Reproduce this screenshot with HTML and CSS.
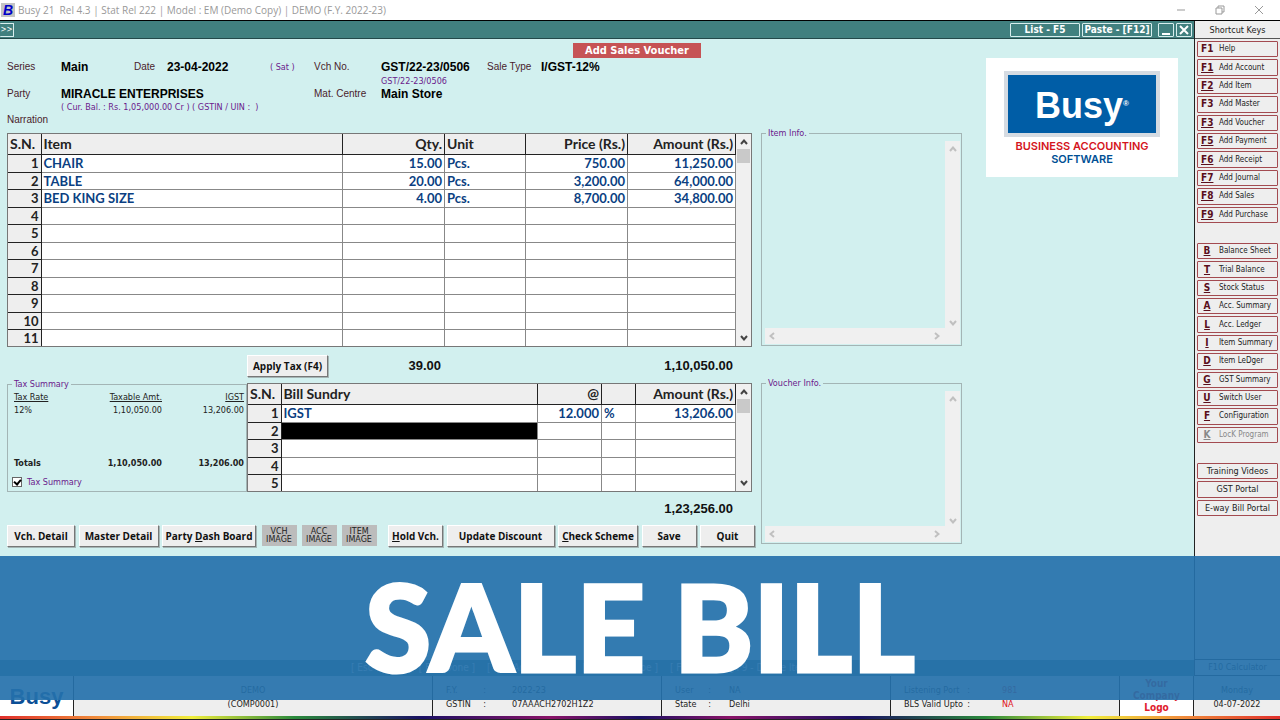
FILE: index.html
```html
<!DOCTYPE html>
<html lang="en">
<head>
    <meta charset="UTF-8">
    <meta name="viewport" content="width=device-width, initial-scale=1.0">
    <title>Busy 21 - Add Sales Voucher</title>
    <link rel="stylesheet" href="styles.css">
</head>
<body>
    <!-- Shared icons -->
    <svg class="sprite" aria-hidden="true">
        <symbol id="up" viewBox="0 0 8 6"><path d="M1 5l3-3.5L7 5"/></symbol>
        <symbol id="down" viewBox="0 0 8 6"><path d="M1 1l3 3.5L7 1"/></symbol>
        <symbol id="left" viewBox="0 0 6 8"><path d="M5 1L1.5 4 5 7"/></symbol>
        <symbol id="right" viewBox="0 0 6 8"><path d="M1 1l3.5 3L1 7"/></symbol>
    </svg>

    <!-- Title bar -->
    <header class="titlebar">
        <span class="app-icon">B</span>
        <span class="app-title">Busy 21&nbsp; Rel 4.3 | Stat Rel 222 | Model : EM (Demo Copy) | DEMO (F.Y. 2022-23)</span>
        <div class="window-controls">
            <button type="button" aria-label="Minimize"><svg viewBox="0 0 10 10"><path d="M1 5h8"/></svg></button>
            <button type="button" aria-label="Restore"><svg viewBox="0 0 10 10"><path d="M1 3h6v6H1zM3 3V1h6v6H7"/></svg></button>
            <button type="button" aria-label="Close"><svg viewBox="0 0 10 10"><path d="M1 1l8 8M9 1L1 9"/></svg></button>
        </div>
    </header>

    <div class="window">
        <div class="workspace">
            <div class="toolbar">
                <button type="button" class="expand">&gt;&gt;</button>
                <button type="button" class="tool">List - F5</button>
                <button type="button" class="tool">Paste - [F12]</button>
                <button type="button" class="tool-icon" aria-label="Minimize voucher"><svg viewBox="0 0 14 12"><path d="M3 10h8"/></svg></button>
                <button type="button" class="tool-icon" aria-label="Close voucher"><svg viewBox="0 0 14 12"><path d="M3 2l8 8M11 2l-8 8"/></svg></button>
            </div>

            <main class="voucher">
                <div class="entry">
                    <h1>Add Sales Voucher</h1>

                    <!-- Voucher header -->
                    <form class="head">
                        <label for="series">Series</label>
                        <input id="series" type="text" value="Main">
                        <label for="date">Date</label>
                        <input id="date" type="text" value="23-04-2022">
                        <span class="note">( Sat )</span>
                        <label for="vchno">Vch No.</label>
                        <input id="vchno" type="text" value="GST/22-23/0506">
                        <label for="saletype">Sale Type</label>
                        <input id="saletype" type="text" value="I/GST-12%">

                        <span class="note vch-note">GST/22-23/0506</span>

                        <label for="party" class="line-3">Party</label>
                        <input id="party" class="line-3 wide" type="text" value="MIRACLE ENTERPRISES">
                        <label for="centre" class="line-3 centre">Mat. Centre</label>
                        <input id="centre" class="line-3 rest" type="text" value="Main Store">

                        <span class="note party-note">( Cur. Bal. : Rs. 1,05,000.00 Cr ) ( GSTIN / UIN :&nbsp; )</span>

                        <label for="narration" class="line-5">Narration</label>
                        <input id="narration" class="line-5 full" type="text" value="">
                    </form>

                    <!-- Items -->
                    <div class="grid">
                        <table>
                            <colgroup>
                                <col class="col-sn"><col><col class="col-qty"><col class="col-unit"><col class="col-price"><col class="col-amount">
                            </colgroup>
                            <thead>
                                <tr><th>S.N.</th><th>Item</th><th class="num">Qty.</th><th>Unit</th><th class="num">Price (Rs.)</th><th class="num">Amount (Rs.)</th></tr>
                            </thead>
                            <tbody>
                                <tr><th>1</th><td>CHAIR</td><td class="num">15.00</td><td>Pcs.</td><td class="num">750.00</td><td class="num">11,250.00</td></tr>
                                <tr><th>2</th><td>TABLE</td><td class="num">20.00</td><td>Pcs.</td><td class="num">3,200.00</td><td class="num">64,000.00</td></tr>
                                <tr><th>3</th><td>BED KING SIZE</td><td class="num">4.00</td><td>Pcs.</td><td class="num">8,700.00</td><td class="num">34,800.00</td></tr>
                                <tr><th>4</th><td></td><td></td><td></td><td></td><td></td></tr>
                                <tr><th>5</th><td></td><td></td><td></td><td></td><td></td></tr>
                                <tr><th>6</th><td></td><td></td><td></td><td></td><td></td></tr>
                                <tr><th>7</th><td></td><td></td><td></td><td></td><td></td></tr>
                                <tr><th>8</th><td></td><td></td><td></td><td></td><td></td></tr>
                                <tr><th>9</th><td></td><td></td><td></td><td></td><td></td></tr>
                                <tr><th>10</th><td></td><td></td><td></td><td></td><td></td></tr>
                                <tr><th>11</th><td></td><td></td><td></td><td></td><td></td></tr>
                            </tbody>
                        </table>
                        <div class="scroll">
                            <svg class="chev"><use href="#up"/></svg>
                            <span class="thumb"></span>
                            <svg class="chev"><use href="#down"/></svg>
                        </div>
                    </div>

                    <div class="totals">
                        <button type="button" class="btn apply">Apply Tax (F4)</button>
                        <span class="total total-qty">39.00</span>
                        <span class="total total-amount">1,10,050.00</span>
                    </div>

                    <!-- Tax summary and bill sundries -->
                    <div class="lower">
                        <fieldset class="box tax">
                            <legend>Tax Summary</legend>
                            <table class="tax-table">
                                <thead>
                                    <tr><th>Tax Rate</th><th class="num">Taxable Amt.</th><th class="num">IGST</th></tr>
                                </thead>
                                <tbody>
                                    <tr><td>12%</td><td class="num">1,10,050.00</td><td class="num">13,206.00</td></tr>
                                </tbody>
                                <tfoot>
                                    <tr><td>Totals</td><td class="num">1,10,050.00</td><td class="num">13,206.00</td></tr>
                                </tfoot>
                            </table>
                            <div class="tax-check">
                                <input type="checkbox" id="taxSummary" checked>
                                <label for="taxSummary">Tax Summary</label>
                            </div>
                        </fieldset>
                        <div class="grid sundry">
                            <table>
                                <colgroup>
                                    <col class="col-sn"><col><col class="col-rate"><col class="col-percent"><col class="col-sum">
                                </colgroup>
                                <thead>
                                    <tr><th>S.N.</th><th>Bill Sundry</th><th class="num">@</th><th></th><th class="num">Amount (Rs.)</th></tr>
                                </thead>
                                <tbody>
                                    <tr><th>1</th><td>IGST</td><td class="num">12.000</td><td>%</td><td class="num">13,206.00</td></tr>
                                    <tr><th>2</th><td class="current"></td><td></td><td></td><td></td></tr>
                                    <tr><th>3</th><td></td><td></td><td></td><td></td></tr>
                                    <tr><th>4</th><td></td><td></td><td></td><td></td></tr>
                                    <tr><th>5</th><td></td><td></td><td></td><td></td></tr>
                                </tbody>
                            </table>
                            <div class="scroll">
                                <svg class="chev"><use href="#up"/></svg>
                                <span class="thumb"></span>
                                <svg class="chev"><use href="#down"/></svg>
                            </div>
                        </div>
                    </div>

                    <div class="grand"><span class="total">1,23,256.00</span></div>

                    <div class="actions">
                        <button type="button" class="btn w-vch">Vch. Detail</button>
                        <button type="button" class="btn w-master">Master Detail</button>
                        <button type="button" class="btn w-party">Party <u>D</u>ash Board</button>
                        <div class="images">
                            <button type="button" class="btn-image">VCH<br>IMAGE</button>
                            <button type="button" class="btn-image">ACC<br>IMAGE</button>
                            <button type="button" class="btn-image">ITEM<br>IMAGE</button>
                        </div>
                        <button type="button" class="btn w-small"><u>H</u>old Vch.</button>
                        <button type="button" class="btn w-discount">Update Discount</button>
                        <button type="button" class="btn w-master"><u>C</u>heck Scheme</button>
                        <button type="button" class="btn w-small">Save</button>
                        <button type="button" class="btn w-small">Quit</button>
                    </div>
                </div>

                <!-- Info panels -->
                <div class="info">
                    <fieldset class="box item-info">
                        <legend>Item Info.</legend>
                        <div class="pane">
                            <div class="pane-y"><svg class="chev"><use href="#up"/></svg><svg class="chev"><use href="#down"/></svg></div>
                            <div class="pane-x"><svg class="chev-h"><use href="#left"/></svg><svg class="chev-h"><use href="#right"/></svg></div>
                        </div>
                    </fieldset>
                    <fieldset class="box voucher-info">
                        <legend>Voucher Info.</legend>
                        <div class="pane">
                            <div class="pane-y"><svg class="chev"><use href="#up"/></svg><svg class="chev"><use href="#down"/></svg></div>
                            <div class="pane-x"><svg class="chev-h"><use href="#left"/></svg><svg class="chev-h"><use href="#right"/></svg></div>
                        </div>
                    </fieldset>
                </div>

                <!-- Product logo -->
                <div class="brand">
                    <div class="brand-name">Busy<sup>®</sup></div>
                    <div class="brand-red">BUSINESS ACCOUNTING</div>
                    <div class="brand-blue">SOFTWARE</div>
                </div>
            </main>

            <div class="hints">
                <span>[ Esc - Quit ]</span>
                <span>[ F2 - Done ]</span>
                <span>[ F3 - Add Master ]</span>
                <span>[ F4 - Sale Type ]</span>
                <span>[ F5 - List ]</span>
                <span>[ F9 - Delete Items ]</span>
            </div>
        </div>

        <!-- Shortcut keys -->
        <aside class="sidebar">
            <h2>Shortcut Keys</h2>
            <div class="keys keys-add">
                <button type="button"><b>F1</b>Help</button>
                <button type="button"><b><u>F1</u></b>Add Account</button>
                <button type="button"><b><u>F2</u></b>Add Item</button>
                <button type="button"><b>F3</b>Add Master</button>
                <button type="button"><b><u>F3</u></b>Add Voucher</button>
                <button type="button"><b><u>F5</u></b>Add Payment</button>
                <button type="button"><b><u>F6</u></b>Add Receipt</button>
                <button type="button"><b><u>F7</u></b>Add Journal</button>
                <button type="button"><b><u>F8</u></b>Add Sales</button>
                <button type="button"><b><u>F9</u></b>Add Purchase</button>
            </div>
            <div class="keys keys-reports">
                <button type="button"><b><u>B</u></b>Balance Sheet</button>
                <button type="button"><b><u>T</u></b>Trial Balance</button>
                <button type="button"><b><u>S</u></b>Stock Status</button>
                <button type="button"><b><u>A</u></b>Acc. Summary</button>
                <button type="button"><b><u>L</u></b>Acc. Ledger</button>
                <button type="button"><b><u>I</u></b>Item Summary</button>
                <button type="button"><b><u>D</u></b>Item LeDger</button>
                <button type="button"><b><u>G</u></b>GST Summary</button>
                <button type="button"><b><u>U</u></b>Switch User</button>
                <button type="button"><b><u>F</u></b>ConFiguration</button>
                <button type="button" disabled><b><u>K</u></b>LocK Program</button>
            </div>
            <div class="keys keys-links">
                <button type="button">Training Videos</button>
                <button type="button">GST Portal</button>
                <button type="button">E-way Bill Portal</button>
            </div>
            <div class="calculator">F10 Calculator</div>
        </aside>
    </div>

    <!-- Status bar -->
    <footer class="status">
        <div class="cell cell-logo">Busy</div>
        <div class="cell cell-company"><span>DEMO</span><span>(COMP0001)</span></div>
        <dl class="cell cell-data">
            <dt>F.Y.</dt><dd>2022-23</dd>
            <dt>GSTIN</dt><dd>07AAACH2702H1Z2</dd>
        </dl>
        <dl class="cell cell-data cell-user">
            <dt>User</dt><dd>NA</dd>
            <dt>State</dt><dd>Delhi</dd>
        </dl>
        <dl class="cell cell-data cell-port">
            <dt>Listening Port</dt><dd class="red">981</dd>
            <dt>BLS Valid Upto</dt><dd class="red">NA</dd>
        </dl>
        <div class="cell cell-yours">Your<br>Company<br>Logo</div>
        <div class="cell cell-date"><span>Monday</span><span>04-07-2022</span></div>
    </footer>
    <div class="rainbow"></div>

    <div class="banner">SALE BILL</div>
</body>
</html>
```

FILE: styles.css
```css
* {
    box-sizing: border-box;
}

body {
    position: relative;
    display: flex;
    flex-direction: column;
    min-height: 100vh;
    margin: 0;
    background: #d2f0ef;
    color: #222;
    font-family: "DejaVu Sans Condensed", "DejaVu Sans", sans-serif;
    font-size: 9px;
    line-height: 12px;
}

button {
    padding: 0;
    font: inherit;
    color: inherit;
    white-space: nowrap;
    cursor: pointer;
}

svg {
    fill: none;
    stroke: currentColor;
}

.sprite {
    position: absolute;
    width: 0;
    height: 0;
}

/* Title bar */
.titlebar {
    display: flex;
    align-items: center;
    gap: 3px;
    height: 20px;
    padding-left: 1px;
    background: #fff;
    color: #999;
    font-family: "Open Sans", sans-serif;
    font-size: 10px;
}

.app-icon {
    width: 14px;
    height: 14px;
    background: #c4c4c4;
    color: #0000c8;
    font: italic bold 14px/14px "Liberation Sans", sans-serif;
    text-align: center;
}

.window-controls {
    display: flex;
    gap: 29px;
    margin-left: auto;
    padding-right: 16px;
}

.window-controls button {
    width: 10px;
    height: 10px;
    border: 0;
    background: none;
}

.window-controls svg {
    display: block;
}

/* Workspace */
.window {
    display: flex;
    flex: 1;
    border-top: 1px solid #000;
}

.workspace {
    display: flex;
    flex: 1;
    flex-direction: column;
    min-width: 0;
}

.toolbar {
    display: flex;
    align-items: center;
    gap: 2px;
    height: 18px;
    padding-right: 2px;
    background: #41807f;
    border-bottom: 1px solid #24494a;
    color: #fff;
    font-size: 10px;
    font-weight: bold;
}

.toolbar button {
    height: 14px;
    border: 1px solid #d8eeee;
    border-radius: 1px;
    background: none;
    line-height: 12px;
}

.toolbar .expand {
    width: 14px;
    margin-right: auto;
    border-left: 0;
    font-size: 8px;
    font-weight: normal;
}

.toolbar .tool {
    width: 70px;
}

.toolbar .tool-icon {
    width: 16px;
}

.tool + .tool-icon {
    margin-left: 4px;
}

.tool-icon svg {
    display: block;
    stroke-width: 2;
}

.voucher {
    display: flex;
    flex: 1;
    align-items: flex-start;
    padding: 4px 16px 0 7px;
}

.entry {
    flex: 1;
    min-width: 0;
    max-width: 748px;
}

h1 {
    width: 128px;
    margin: 0 54px 0 auto;
    background: #c65355;
    color: #fff;
    font-family: "DejaVu Sans Condensed", "DejaVu Sans", sans-serif;
    font-size: 11px;
    line-height: 15px;
    text-align: center;
}

/* Voucher header */
.head {
    display: grid;
    grid-template-columns: 54px 73px 33px 103px 44px 67px 106px 54px 1fr;
    grid-template-rows: 18px 9px 18px 8px 18px;
    align-items: center;
    height: 75px;
}

.head label {
    color: #4a1c2c;
    font-family: "Liberation Sans", sans-serif;
    font-size: 10px;
}

.head input {
    width: 100%;
    min-width: 0;
    height: 16px;
    padding: 0;
    border: 0;
    outline: none;
    background: none;
    color: #000;
    font: bold 12px/16px "Liberation Sans", sans-serif;
}

.head .note {
    color: #6a1a8c;
    line-height: 8px;
    white-space: nowrap;
}

.head .vch-note {
    grid-column: 7;
    grid-row: 2;
}

.head .line-3 {
    grid-row: 3;
}

.head .line-5 {
    grid-row: 5;
}

.head .wide {
    grid-column: 2 / 6;
}

.head .centre {
    grid-column: 6;
}

.head .rest {
    grid-column: 7 / 10;
}

.head .party-note {
    grid-column: 2 / 7;
    grid-row: 4;
}

.head .full {
    grid-column: 2 / 10;
}

/* Data grids */
.grid {
    display: flex;
    margin-right: 3px;
    border: 1px solid #777;
    background: #fff;
}

.grid table {
    flex: 1;
    min-width: 0;
    border-collapse: collapse;
    table-layout: fixed;
    font: bold 13px/16px Lato, sans-serif;
}

.grid th,
.grid td {
    height: 18px;
    padding: 0 2px;
    border-right: 1px solid #888;
    border-bottom: 1px solid #888;
    color: #0b3f82;
    text-align: left;
    white-space: nowrap;
}

.grid tr:nth-child(even) th,
.grid tr:nth-child(even) td {
    height: 17px;
}

.grid tbody tr:last-child > * {
    height: 17px;
    border-bottom: 0;
}

.grid th {
    background: #eee;
    border-color: #222;
    color: #222;
}

.grid thead th {
    height: 20px;
    font-size: 14px;
}

.grid tbody th {
    text-align: right;
}

.grid .num,
.tax-table .num {
    text-align: right;
}

.grid .current {
    background: #000;
}

.col-sn { width: 33px; }
.col-qty { width: 102px; }
.col-unit { width: 81px; }
.col-price { width: 102px; }
.col-amount { width: 108px; }
.col-rate { width: 64px; }
.col-percent { width: 34px; }
.col-sum { width: 100px; }

.scroll {
    display: flex;
    flex-direction: column;
    align-items: center;
    width: 15px;
    padding: 5px 0;
    background: #f0f0f0;
    color: #444;
}

.scroll .thumb {
    width: 13px;
    height: 14px;
    margin: 4px 0 auto;
    background: #c9c9c9;
}

.chev {
    width: 8px;
    height: 6px;
    stroke-width: 2;
}

.chev-h {
    width: 6px;
    height: 8px;
    stroke-width: 2;
}

.total {
    color: #111;
    font: bold 13px/16px "Liberation Sans", sans-serif;
    text-align: right;
}

.totals {
    display: flex;
    align-items: center;
    height: 31px;
    padding: 7px 22px 0 240px;
}

.total-qty {
    width: 113px;
}

.total-amount {
    margin-left: auto;
}

.btn {
    height: 22px;
    padding-bottom: 1px;
    border: 1px solid;
    border-color: #fff #777 #777 #fff;
    box-shadow: 1px 1px 0 #a5b5b5;
    background: #eee;
    color: #111;
    font-family: "Open Sans", sans-serif;
    font-size: 10px;
    font-weight: bold;
}

.apply {
    width: 81px;
}

/* Tax summary and bill sundries */
.lower {
    display: flex;
    align-items: flex-end;
}

.box {
    min-width: 0;
    margin: 0;
    padding: 0;
    border: 1px solid #a3b5b5;
}

.box legend {
    margin-left: 4px;
    padding: 0 2px;
    color: #6a1a8c;
}

.tax {
    display: flex;
    flex-direction: column;
    width: 240px;
    height: 114px;
}

.tax-table {
    width: 100%;
    padding: 0 2px 0 6px;
    border-spacing: 0;
}

.tax-table th,
.tax-table td {
    height: 13px;
    padding: 0;
}

.tax-table th {
    font-weight: normal;
    text-align: left;
    text-decoration: underline;
}

.tax-table th:last-child {
    width: 82px;
}

.tax-table tfoot td {
    height: 55px;
    padding-bottom: 2px;
    font-weight: bold;
    vertical-align: bottom;
}

.tax-check {
    display: flex;
    align-items: center;
    gap: 5px;
    padding: 5px 4px 3px;
    color: #6a1a8c;
}

.tax-check input {
    width: 10px;
    height: 10px;
    margin: 0;
    border: 1px solid #666;
    appearance: none;
    background: #fff;
}

.tax-check input:checked::after {
    content: "";
    display: block;
    width: 3px;
    height: 5px;
    margin: 0 0 0 2px;
    border: solid #000;
    border-width: 0 2px 2px 0;
    transform: rotate(40deg);
}

.sundry {
    flex: 1;
    min-width: 0;
}

.grand {
    height: 33px;
    padding: 9px 22px 0 0;
    text-align: right;
}

.actions {
    display: flex;
    justify-content: space-between;
}

.images {
    display: flex;
    gap: 5px;
    margin: 0 8px 0 2px;
}

.btn-image {
    width: 35px;
    height: 21px;
    border: 0;
    background: #bcbcbc;
    color: #222;
    font: 8px/8px "DejaVu Sans", sans-serif;
}

.w-vch { width: 68px; }
.w-master { width: 80px; }
.w-party { width: 94px; }
.w-discount { width: 108px; }
.w-small { width: 55px; }

/* Info panels */
.info {
    width: 201px;
    margin: 84px 0 0 6px;
}

.item-info,
.voucher-info {
    display: flex;
    flex-direction: column;
}

.item-info {
    height: 219px;
}

.voucher-info {
    height: 167px;
    margin-top: 31px;
}

.pane {
    display: grid;
    flex: 1;
    grid-template-columns: 1fr 15px;
    grid-template-rows: 1fr 16px;
    padding: 2px 1px 1px 3px;
    color: #c0c0c0;
}

.pane-y {
    display: flex;
    grid-column: 2;
    flex-direction: column;
    justify-content: space-between;
    align-items: center;
    padding: 5px 0 2px;
    background: #f0f0f0;
}

.pane-x {
    display: flex;
    grid-column: 1 / 3;
    justify-content: space-between;
    align-items: center;
    padding: 0 20px 0 4px;
    background: #f0f0f0;
}

/* Product logo */
.brand {
    width: 192px;
    height: 119px;
    margin: 15px 0 0 auto;
    padding: 13px 18px;
    background: #fff;
    font: 600 11px/13px Inter, sans-serif;
    text-align: center;
    white-space: nowrap;
}

.brand-name {
    height: 66px;
    margin-bottom: 3px;
    border: 4px solid #d5dbe2;
    background: #005da6;
    color: #fff;
    font: bold 36px/62px "Liberation Sans", sans-serif;
}

.brand-name sup {
    font-size: 8px;
    line-height: 8px;
    vertical-align: 12px;
}

.brand-red {
    color: #d4141c;
}

.brand-blue {
    color: #004f94;
}

.hints {
    display: flex;
    gap: 12px;
    height: 16px;
    padding-left: 351px;
    background: #41807f;
    color: #fff;
    font-size: 10px;
    line-height: 16px;
}

/* Shortcut keys */
.sidebar {
    display: flex;
    flex-direction: column;
    width: 86px;
    border-left: 1px solid #222;
    background: #eee;
}

.sidebar h2 {
    height: 18px;
    margin: 0 0 2px;
    border-bottom: 1px solid #555;
    font-size: 9px;
    font-weight: normal;
    line-height: 18px;
    text-align: center;
}

.keys {
    display: grid;
    grid-template-columns: minmax(0, 1fr);
    grid-auto-rows: 1fr;
    gap: 2px;
    margin-bottom: 20px;
    padding: 0 2px;
    font-size: 8px;
}

.keys button {
    display: flex;
    align-items: center;
    border: 1px solid #a34a50;
    border-radius: 1px;
    background: #eee;
}

.keys button:disabled {
    color: #888;
}

.keys b {
    width: 21px;
    padding-left: 3px;
    color: #5a0f1c;
    font-size: 10px;
    text-align: left;
}

.keys-reports b {
    padding: 0 3px 0 0;
    text-align: center;
}

.keys button:disabled b {
    color: #888;
}

.keys-add { height: 182px; }
.keys-reports { height: 200px; }

.keys-links {
    height: 53px;
    font-size: 9px;
}

.keys-links button {
    justify-content: center;
}

.calculator {
    height: 17px;
    margin-top: auto;
    border: solid #222;
    border-width: 1px 0;
    line-height: 15px;
    text-align: center;
}

/* Status bar */
.status {
    display: flex;
    height: 40px;
    background: #eee;
}

.cell {
    margin: 0;
    border-right: 1px solid #222;
    line-height: 14px;
    white-space: nowrap;
}

.cell-logo {
    width: 74px;
    background: #fff;
    color: #0c4f96;
    font: bold 22px/41px "Liberation Sans", sans-serif;
    text-align: center;
}

.cell-company,
.cell-date {
    display: flex;
    flex-direction: column;
    padding-top: 7px;
    text-align: center;
}

.cell-company {
    flex: 1;
}

.cell-data {
    display: grid;
    flex: 0 1 229px;
    grid-template-columns: 66px 1fr;
    align-content: start;
    padding: 7px 0 0 13px;
}

.cell-user {
    grid-template-columns: 54px 1fr;
}

.cell-port {
    grid-template-columns: 98px 1fr;
}

.cell-data dt {
    display: flex;
    justify-content: space-between;
}

.cell-data dt::after {
    content: ":";
    padding-right: 26px;
}

.cell-user dt::after {
    padding-right: 18px;
}

.cell-port dt::after {
    padding-right: 32px;
}

.cell-data dd {
    margin: 0;
}

.cell-data .red {
    color: #e01020;
}

.cell-yours {
    width: 74px;
    background: #fff;
    color: #e0202c;
    font-size: 10px;
    font-weight: bold;
    line-height: 12px;
    padding-top: 2px;
    text-align: center;
}

.cell-date {
    width: 86px;
    border-right: 0;
}

.rainbow {
    height: 4px;
    border-bottom: 1px solid #222;
    background: linear-gradient(to right, #e0302c, #f0913c 8%, #f0ee3c 15%, #2a8a3c 23%, #1a1064 33%, #8a1468 43%, #1a1064 50%, #8a1468 57%, #1a1064 67%, #2a8a3c 77%, #f0ee3c 85%, #f0913c 92%, #e0302c);
}

/* Caption over the bottom of the window */
.banner {
    position: absolute;
    right: 0;
    bottom: 20px;
    left: 0;
    height: 144px;
    background: rgba(37, 113, 171, 0.92);
    color: #fff;
    font: 900 120px/140px Lato, sans-serif;
    text-align: center;
    -webkit-text-stroke: 3px #fff;
}
```
